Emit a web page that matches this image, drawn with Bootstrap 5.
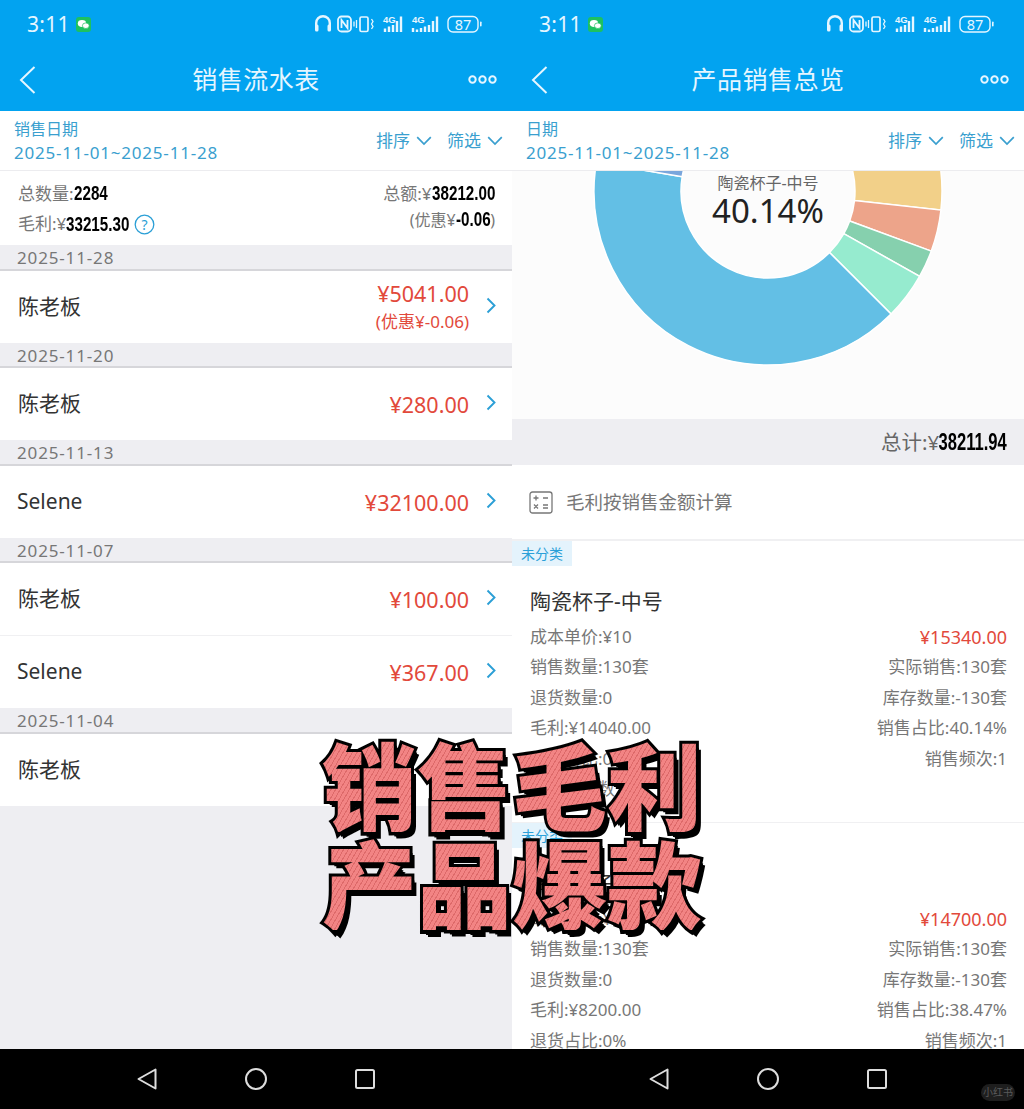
<!DOCTYPE html>
<html lang="zh">
<head>
<meta charset="utf-8">
<title>销售流水表 / 产品销售总览</title>
<link href="https://cdn.jsdelivr.net/npm/bootstrap@5.3.0/dist/css/bootstrap.min.css" rel="stylesheet">
<style>
html,body{margin:0;height:1109px;overflow:hidden}
body{font-family:"Noto Sans","Noto Sans CJK SC",sans-serif;background:#000;color:#333}
.stage{width:1024px;height:1109px}
.pane{width:512px;height:1109px;background:#eeeef2}
.pane-body{height:938px;overflow:hidden;background:#eeeef2}
.apphead{height:111px;background:#02a3f0;color:#e6f6ff}
.statusline{height:48px;padding:0 30px 0 27px}
.clock{font-size:21px;line-height:1;letter-spacing:.3px}
.wechat{width:15px;height:15px;margin-left:6px;margin-right:auto;background:#1ec15f;border-radius:3px}
.titleline{height:63px;padding:0 15px 0 19px}
.apptitle{font-size:25px;line-height:1;font-family:"Noto Sans CJK SC",sans-serif;letter-spacing:.5px;left:0;right:0;text-align:center;margin-top:-2px}
.filterbar{height:60px;background:#fff;border-bottom:1px solid #ececef;padding:1px 9px 0 14px;color:#3a9fcf}
.fb-label{font-size:16px;line-height:24px}
.fb-date{font-size:17px;line-height:24px;letter-spacing:.8px}
.fb-opt{font-size:17px;gap:6px;margin-left:15px}
.summary{height:74px;background:#fff;padding:8px 17px 0 18px;font-size:17px;color:#777;line-height:30px}
.strong-num{display:inline-block;font-family:"Liberation Sans",sans-serif;font-weight:700;color:#000;font-size:20px;line-height:1;transform:scaleX(.76)}
.to-left{transform-origin:left center}
.to-right{transform-origin:right center}
.len4.to-left{margin-right:-.53em}
.len8.to-left{margin-right:-1em}
.len8.to-right{margin-left:-1em}
.len5.to-right{margin-left:-.55em}
.sum-sub{font-size:16px;line-height:20px;margin-top:0}
.totalbar .strong-num{font-size:24px;transform:scaleX(.69)}
.totalbar .len8.to-right{margin-left:-1.29em}
.dayband{height:25.5px;background:#eeeef2;border-bottom:2px solid #d6d6da;padding-left:17px;font-size:17px;line-height:25px;color:#777;letter-spacing:.85px}
.sale-row{height:72px;background:#fff;padding:0 16px 0 18px}
.sale-row+.sale-row{height:73px;border-top:1px solid #f0f0f2}
.sale-name{font-size:21px;color:#333}
.sale-name.latin{margin-left:-1px}
.sale-money{color:#e2493b;font-size:21.5px;line-height:28px;text-align:right;margin-right:17px;padding-top:2px}
.sale-disc{font-size:17px;line-height:26px;margin-top:1px}
.tick{width:10px;height:17px;margin-top:-3px}
.chartbox{height:248px;background:#fcfcfc;overflow:hidden}
.chartbox svg{display:block}
.donut-name{top:1px;left:0;right:0;text-align:center;font-size:16px;line-height:22px;color:#666}
.donut-val{top:21px;left:0;right:0;text-align:center;font-size:33px;line-height:38px;color:#222}
.totalbar{height:46px;background:#eeeef2;padding:0 17px;font-size:20.5px;color:#666}
.calcrow{height:76px;background:#fff;border-bottom:2px solid #f0f0f2;padding-left:17px;font-size:18.5px;color:#777;gap:13px}
.prod{background:#fff;height:282px;border-bottom:1px solid #f0f0f2}
.cat-tag{width:60px;height:25px;background:#e4f3fc;color:#2ba0d8;font-size:14px;line-height:25px;text-align:center}
.prod-title{font-size:21px;color:#333;line-height:30px;padding:20px 17px 6px 18px;height:56px}
.prod-line{height:30.4px;line-height:30.4px;padding:0 17px 0 18px;font-size:17px;color:#777}
.prod-line .red{color:#e2493b;font-size:18px}
.navkeys{height:60px;background:#000;gap:88px}
.wmark{right:9px;bottom:8px;width:34px;height:17px;border-radius:9px;background:#1e1e1e;color:#5a5a5a;font-size:10px;line-height:17px;text-align:center}
.slogan{left:322px;top:734px;z-index:5;font-family:"Noto Sans CJK SC",sans-serif;font-weight:900;font-size:95px;line-height:98px}
.slogan-line{position:relative;display:block;color:transparent;white-space:nowrap;background:repeating-linear-gradient(120deg,#f28484 0 3px,#dd6a6a 3px 4px);-webkit-background-clip:text;background-clip:text}
.slogan-line::before{content:attr(data-t);position:absolute;left:0;top:0;z-index:-1;color:#000;-webkit-text-stroke:6px #000;text-shadow:5px 6px 0 #000,3px 4px 0 #000}
</style>
</head>
<body>
<svg width="0" height="0" class="position-absolute">
  <defs>
    <symbol id="status-icons" viewBox="0 0 168 24">
      <path d="M2.200 18V11a6.800 6.800 0 0 1 13.600 0V18" fill="none" stroke="#e6f6ff" stroke-width="2.400"/>
      <rect x="1" y="12.500" width="3.500" height="7" rx="1.500" fill="#e6f6ff"/>
      <rect x="13.500" y="12.500" width="3.500" height="7" rx="1.500" fill="#e6f6ff"/>
      <rect x="24" y="4.500" width="13" height="15" rx="3.500" fill="none" stroke="#e6f6ff" stroke-width="1.800"/>
      <path d="M27.500 16V8l6 8V8" fill="none" stroke="#e6f6ff" stroke-width="1.800"/>
      <rect x="46" y="5" width="8" height="14.500" rx="1.500" fill="none" stroke="#e6f6ff" stroke-width="1.700"/>
      <path d="M42.500 8v8M40 9.500v5M57.500 7l1.500 2.500-1.500 2.500 1.500 2.500-1.500 2.500" fill="none" stroke="#e6f6ff" stroke-width="1.300"/>
      <text x="69" y="10.500" font-size="9.500" font-weight="700" fill="#e6f6ff" font-family="Liberation Sans,sans-serif">4G</text>
      <path d="M71 20v-3.500M75 20v-5.500M79 20v-7M83 20v-11M87 20v-15.500" stroke="#e6f6ff" stroke-width="2.400" fill="none"/>
      <text x="98" y="10.500" font-size="9.500" font-weight="700" fill="#e6f6ff" font-family="Liberation Sans,sans-serif">4G</text>
      <path d="M99 20v-4M103 20v-2.500M107 20v-4M111 20v-5.500M115 20v-7M119 20v-11M123 20v-15.500" stroke="#e6f6ff" stroke-width="2.400" fill="none"/>
      <rect x="134" y="4.500" width="30" height="15.500" rx="5" fill="none" stroke="#e6f6ff" stroke-width="1.400"/>
      <rect x="166" y="9.500" width="1.600" height="5" rx=".8" fill="#e6f6ff"/>
      <text x="149" y="17.500" text-anchor="middle" font-size="14.500" fill="#e6f6ff" font-family="Noto Sans,sans-serif">87</text>
    </symbol>
    <symbol id="wx" viewBox="0 0 15 15">
      <ellipse cx="6" cy="6.500" rx="4.200" ry="3.400" fill="#fff"/>
      <ellipse cx="9.800" cy="8.700" rx="3.400" ry="2.800" fill="#fff" stroke="#1ec15f" stroke-width=".7"/>
    </symbol>
    <symbol id="chev-right" viewBox="0 0 10 17"><path d="M1.500 1.500 8.500 8.500 1.500 15.500" fill="none" stroke="#2b9fd6" stroke-width="1.900"/></symbol>
    <symbol id="chev-down" viewBox="0 0 16 10"><path d="M1.200 1.200 8 8 14.800 1.200" fill="none" stroke="#3a9fcf" stroke-width="1.700"/></symbol>
  </defs>
</svg>

<div class="stage d-flex position-relative">

  <!-- left -->
  <section class="pane d-flex flex-column">
    <header class="apphead">
      <div class="statusline d-flex align-items-center">
        <span class="clock">3:11</span>
        <svg class="wechat" aria-hidden="true"><use href="#wx"/></svg>
        <svg width="168" height="24" aria-hidden="true"><use href="#status-icons"/></svg>
      </div>
      <div class="titleline d-flex align-items-center justify-content-between position-relative">
        <svg width="17" height="28" viewBox="0 0 17 28" aria-hidden="true"><path d="M15.500 1 2 14l13.500 13" fill="none" stroke="#e6f6ff" stroke-width="2"/></svg>
        <span class="apptitle position-absolute">销售流水表</span>
        <svg width="29" height="9" viewBox="0 0 29 9" aria-hidden="true"><g fill="none" stroke="#e6f6ff" stroke-width="2"><circle cx="4.500" cy="4.500" r="3.200"/><circle cx="14.500" cy="4.500" r="3.200"/><circle cx="24.500" cy="4.500" r="3.200"/></g></svg>
      </div>
    </header>
    <div class="pane-body">
      <div class="filterbar d-flex justify-content-between align-items-center">
        <div>
          <div class="fb-label">销售日期</div>
          <div class="fb-date">2025-11-01~2025-11-28</div>
        </div>
        <div class="d-flex">
          <span class="fb-opt d-flex align-items-center">排序 <svg width="16" height="10" aria-hidden="true"><use href="#chev-down"/></svg></span>
          <span class="fb-opt d-flex align-items-center">筛选 <svg width="16" height="10" aria-hidden="true"><use href="#chev-down"/></svg></span>
        </div>
      </div>
      <div class="summary d-flex justify-content-between">
        <div>
          <div>总数量:<span class="strong-num to-left len4">2284</span></div>
          <div class="d-flex align-items-center">毛利:¥<span class="strong-num to-left len8">33215.30</span>
            <svg class="ms-1" width="21" height="21" viewBox="0 0 21 21" aria-hidden="true"><circle cx="10.500" cy="10.500" r="9.300" fill="none" stroke="#2b9fd6" stroke-width="1.300"/><text x="10.500" y="15.500" text-anchor="middle" font-size="14" fill="#2b9fd6" font-family="Noto Sans,sans-serif">?</text></svg>
          </div>
        </div>
        <div class="text-end">
          <div>总额:¥<span class="strong-num to-right len8">38212.00</span></div>
          <div class="sum-sub">(优惠¥<span class="strong-num to-right len5">-0.06</span>)</div>
        </div>
      </div>

      <div class="dayband">2025-11-28</div>
      <div class="sale-row d-flex align-items-center">
        <span class="sale-name me-auto">陈老板</span>
        <div class="sale-money"><div>¥5041.00</div><div class="sale-disc">(优惠¥-0.06)</div></div>
        <svg class="tick" aria-hidden="true"><use href="#chev-right"/></svg>
      </div>
      <div class="dayband">2025-11-20</div>
      <div class="sale-row d-flex align-items-center">
        <span class="sale-name me-auto">陈老板</span>
        <div class="sale-money">¥280.00</div>
        <svg class="tick" aria-hidden="true"><use href="#chev-right"/></svg>
      </div>
      <div class="dayband">2025-11-13</div>
      <div class="sale-row d-flex align-items-center">
        <span class="sale-name latin me-auto">Selene</span>
        <div class="sale-money">¥32100.00</div>
        <svg class="tick" aria-hidden="true"><use href="#chev-right"/></svg>
      </div>
      <div class="dayband">2025-11-07</div>
      <div class="sale-row d-flex align-items-center">
        <span class="sale-name me-auto">陈老板</span>
        <div class="sale-money">¥100.00</div>
        <svg class="tick" aria-hidden="true"><use href="#chev-right"/></svg>
      </div>
      <div class="sale-row d-flex align-items-center">
        <span class="sale-name latin me-auto">Selene</span>
        <div class="sale-money">¥367.00</div>
        <svg class="tick" aria-hidden="true"><use href="#chev-right"/></svg>
      </div>
      <div class="dayband">2025-11-04</div>
      <div class="sale-row d-flex align-items-center">
        <span class="sale-name me-auto">陈老板</span>
      </div>
    </div>
    <footer class="navkeys d-flex justify-content-center align-items-center">
      <svg width="20" height="22" viewBox="0 0 20 22" aria-hidden="true"><path d="M18.500 1.500v19L1.500 11z" fill="none" stroke="#ddd" stroke-width="2" stroke-linejoin="round"/></svg>
      <svg width="22" height="22" viewBox="0 0 22 22" aria-hidden="true"><circle cx="11" cy="11" r="10" fill="none" stroke="#ddd" stroke-width="2"/></svg>
      <svg width="20" height="20" viewBox="0 0 20 20" aria-hidden="true"><rect x="1" y="1" width="18" height="18" rx="1.500" fill="none" stroke="#ddd" stroke-width="2"/></svg>
    </footer>
  </section>

  <!-- right -->
  <section class="pane d-flex flex-column position-relative">
    <header class="apphead">
      <div class="statusline d-flex align-items-center">
        <span class="clock">3:11</span>
        <svg class="wechat" aria-hidden="true"><use href="#wx"/></svg>
        <svg width="168" height="24" aria-hidden="true"><use href="#status-icons"/></svg>
      </div>
      <div class="titleline d-flex align-items-center justify-content-between position-relative">
        <svg width="17" height="28" viewBox="0 0 17 28" aria-hidden="true"><path d="M15.500 1 2 14l13.500 13" fill="none" stroke="#e6f6ff" stroke-width="2"/></svg>
        <span class="apptitle position-absolute">产品销售总览</span>
        <svg width="29" height="9" viewBox="0 0 29 9" aria-hidden="true"><g fill="none" stroke="#e6f6ff" stroke-width="2"><circle cx="4.500" cy="4.500" r="3.200"/><circle cx="14.500" cy="4.500" r="3.200"/><circle cx="24.500" cy="4.500" r="3.200"/></g></svg>
      </div>
    </header>
    <div class="pane-body">
      <div class="filterbar d-flex justify-content-between align-items-center">
        <div>
          <div class="fb-label">日期</div>
          <div class="fb-date">2025-11-01~2025-11-28</div>
        </div>
        <div class="d-flex">
          <span class="fb-opt d-flex align-items-center">排序 <svg width="16" height="10" aria-hidden="true"><use href="#chev-down"/></svg></span>
          <span class="fb-opt d-flex align-items-center">筛选 <svg width="16" height="10" aria-hidden="true"><use href="#chev-down"/></svg></span>
        </div>
      </div>
      <div class="chartbox position-relative">
        <svg width="512" height="248" viewBox="0 0 512 248" aria-hidden="true">
          <g stroke="#fff" stroke-width="1.500">
            <path fill="#f2d089" d="M379 -103A174 174 0 0 1 428.950 39.100L342.470 29.550A87 87 0 0 0 317.500 -41.500Z"/>
            <path fill="#eda48a" d="M428.950 39.100A174 174 0 0 1 419.300 80.100L337.650 50.040A87 87 0 0 0 342.470 29.550Z"/>
            <path fill="#86d0ae" d="M419.300 80.100A174 174 0 0 1 407.600 105.400L331.800 62.700A87 87 0 0 0 337.650 50.040Z"/>
            <path fill="#96ebcf" d="M407.600 105.400A174 174 0 0 1 379.040 143.040L317.520 81.520A87 87 0 0 0 331.800 62.700Z"/>
            <path fill="#63bfe5" d="M379.040 143.040A174 174 0 0 1 84.400 -8.700L170.200 5.640A87 87 0 0 0 317.520 81.520Z"/>
            <path fill="#7aa6dc" d="M84.400 -8.700A174 174 0 0 1 122.700 -91.900L189.400 -35.900A87 87 0 0 0 170.200 5.640Z"/>
          </g>
        </svg>
        <div class="donut-name position-absolute">陶瓷杯子-中号</div>
        <div class="donut-val position-absolute">40.14%</div>
      </div>
      <div class="totalbar d-flex justify-content-end align-items-center"><span>总计:¥<span class="strong-num to-right len8">38211.94</span></span></div>
      <div class="calcrow d-flex align-items-center">
        <svg width="24" height="23" viewBox="0 0 24 23" aria-hidden="true"><rect x="1" y="1" width="22" height="21" rx="2.500" fill="none" stroke="#777" stroke-width="1.300"/><path d="M4.500 7h5M7 4.500v5M14 7h5M5 13.500l4 4M9 13.500l-4 4M14 14h5M14 17h5" fill="none" stroke="#777" stroke-width="1.300"/></svg>
        <span>毛利按销售金额计算</span>
      </div>
      <article class="prod">
        <div class="cat-tag">未分类</div>
        <div class="prod-title">陶瓷杯子-中号</div>
        <div class="prod-line d-flex justify-content-between"><span>成本单价:¥10</span><span class="red">¥15340.00</span></div>
        <div class="prod-line d-flex justify-content-between"><span>销售数量:130套</span><span>实际销售:130套</span></div>
        <div class="prod-line d-flex justify-content-between"><span>退货数量:0</span><span>库存数量:-130套</span></div>
        <div class="prod-line d-flex justify-content-between"><span>毛利:¥14040.00</span><span>销售占比:40.14%</span></div>
        <div class="prod-line d-flex justify-content-between"><span>退货占比:0%</span><span>销售频次:1</span></div>
        <div class="prod-line d-flex justify-content-between"><span>销售订单数</span></div>
      </article>
      <article class="prod">
        <div class="cat-tag">未分类</div>
        <div class="prod-title">陶瓷杯子-大号</div>
        <div class="prod-line d-flex justify-content-between"><span>成本单价:¥50</span><span class="red">¥14700.00</span></div>
        <div class="prod-line d-flex justify-content-between"><span>销售数量:130套</span><span>实际销售:130套</span></div>
        <div class="prod-line d-flex justify-content-between"><span>退货数量:0</span><span>库存数量:-130套</span></div>
        <div class="prod-line d-flex justify-content-between"><span>毛利:¥8200.00</span><span>销售占比:38.47%</span></div>
        <div class="prod-line d-flex justify-content-between"><span>退货占比:0%</span><span>销售频次:1</span></div>
      </article>
    </div>
    <footer class="navkeys d-flex justify-content-center align-items-center">
      <svg width="20" height="22" viewBox="0 0 20 22" aria-hidden="true"><path d="M18.500 1.500v19L1.500 11z" fill="none" stroke="#ddd" stroke-width="2" stroke-linejoin="round"/></svg>
      <svg width="22" height="22" viewBox="0 0 22 22" aria-hidden="true"><circle cx="11" cy="11" r="10" fill="none" stroke="#ddd" stroke-width="2"/></svg>
      <svg width="20" height="20" viewBox="0 0 20 20" aria-hidden="true"><rect x="1" y="1" width="18" height="18" rx="1.500" fill="none" stroke="#ddd" stroke-width="2"/></svg>
    </footer>
    <div class="wmark position-absolute">小红书</div>
  </section>

  <!-- caption over both screens -->
  <div class="slogan position-absolute">
    <span class="slogan-line" data-t="销售毛利">销售毛利</span>
    <span class="slogan-line" data-t="产品爆款">产品爆款</span>
  </div>
</div>
<script src="https://cdn.jsdelivr.net/npm/bootstrap@5.3.0/dist/js/bootstrap.bundle.min.js"></script>
</body>
</html>
